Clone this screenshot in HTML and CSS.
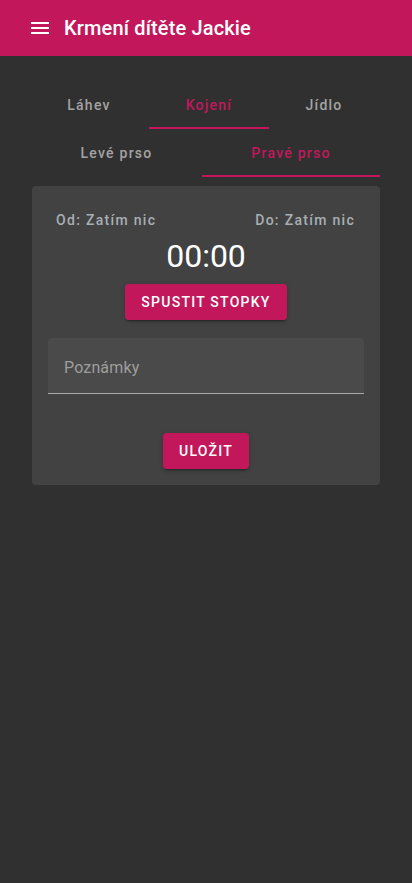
FILE: index.html
```html
<!DOCTYPE html>
<html lang="cs">
<head>
<meta charset="utf-8">
<meta name="viewport" content="width=device-width, initial-scale=1">
<title>Krmení dítěte Jackie</title>
<link rel="stylesheet" href="styles.css">
</head>
<body>
<header class="appbar">
  <button class="menu-btn" aria-label="menu">
    <svg viewBox="0 0 24 24" width="24" height="24"><path fill="#fff" d="M3 18h18v-2H3v2zm0-5h18v-2H3v2zm0-7v2h18V6H3z"/></svg>
  </button>
  <h1 class="title">Krmení dítěte Jackie</h1>
</header>
<main class="content">
  <nav class="tabs tabs-main">
    <div class="tab"><span>Láhev</span></div>
    <div class="tab active"><span>Kojení</span></div>
    <div class="tab"><span class="shift-left">Jídlo</span></div>
  </nav>
  <nav class="tabs tabs-sub">
    <div class="tab"><span class="shift-right">Levé prso</span></div>
    <div class="tab active"><span>Pravé prso</span></div>
  </nav>
  <section class="card">
    <div class="times">
      <span>Od: Zatím nic</span>
      <span>Do: Zatím nic</span>
    </div>
    <div class="timer">00:00</div>
    <div class="center">
      <button class="btn">SPUSTIT STOPKY</button>
    </div>
    <div class="field">
      <span class="placeholder">Poznámky</span>
    </div>
    <div class="center save">
      <button class="btn">ULOŽIT</button>
    </div>
  </section>
</main>
</body>
</html>
```
FILE: styles.css
```css
* { box-sizing: border-box; }
html, body { margin: 0; padding: 0; }
body {
  background: #303030;
  font-family: Roboto, "Noto Sans", sans-serif;
  color: #fff;
  min-height: 883px;
}
.appbar {
  height: 56px;
  background: #c2185b;
  display: flex;
  align-items: center;
  padding-left: 28px;
}
.menu-btn {
  background: none;
  border: 0;
  padding: 0;
  margin: 0;
  width: 24px;
  height: 24px;
  display: flex;
}
.title {
  margin: 0 0 0 12px;
  font-size: 20px;
  font-weight: 500;
  letter-spacing: 0.15px;
  color: #fff;
}
.content {
  padding-top: 25px;
}
.tabs {
  display: flex;
}
.tabs-main {
  width: 360px;
  margin-left: 29px;
}
.tabs-sub {
  width: 356px;
  margin-left: 24px;
}
.tab {
  flex: 1 1 0;
  min-width: 0;
  height: 48px;
  display: flex;
  align-items: center;
  justify-content: center;
  font-size: 14px;
  font-weight: 500;
  letter-spacing: 1.25px;
  color: #a3a3a3;
  border-bottom: 2px solid transparent;
  padding-top: 2px;
}
.shift-left {
  margin-right: 10px;
}
.shift-right {
  margin-left: 7px;
}
.tab.active {
  color: #c2185b;
  border-bottom-color: #c2185b;
}
.card {
  margin: 9px 32px 0 32px;
  width: 348px;
  background: #424242;
  border-radius: 4px;
  padding: 16px;
}
.times {
  display: flex;
  justify-content: space-between;
  padding: 8px 9px 0 8px;
  font-size: 14px;
  font-weight: 500;
  letter-spacing: 1.3px;
  color: #a7afb3;
  line-height: 20px;
}
.timer {
  text-align: center;
  font-size: 32px;
  line-height: 42px;
  margin-top: 5px;
  margin-bottom: 7px;
  font-weight: 400;
}
.center {
  display: flex;
  justify-content: center;
}
.btn {
  background: #c2185b;
  color: #fff;
  border: 0;
  border-radius: 4px;
  height: 36px;
  padding: 0 16px;
  font-family: Roboto, "Noto Sans", sans-serif;
  font-size: 14px;
  font-weight: 500;
  letter-spacing: 1.25px;
  box-shadow: 0 3px 1px -2px rgba(0,0,0,.2), 0 2px 2px 0 rgba(0,0,0,.14), 0 1px 5px 0 rgba(0,0,0,.12);
}
.field {
  margin-top: 18px;
  height: 56px;
  background: #4a4a4a;
  border-radius: 4px 4px 0 0;
  border-bottom: 1px solid #a8a8a8;
  display: flex;
  align-items: center;
  padding-left: 16px;
  padding-top: 3px;
}
.placeholder {
  font-size: 16px;
  letter-spacing: 0.15px;
  color: #9e9e9e;
}
.save {
  margin-top: 39px;
}
```
